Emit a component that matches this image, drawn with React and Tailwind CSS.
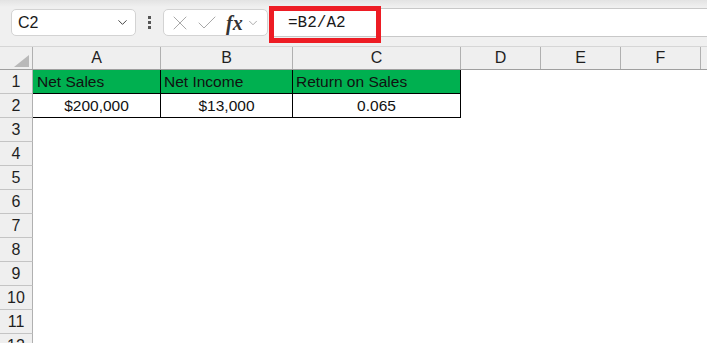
import React from 'react';
import { X, Check, ChevronDown } from 'lucide-react';

const cols = [
  { label: 'A', w: 'w-[128px]' },
  { label: 'B', w: 'w-[132px]' },
  { label: 'C', w: 'w-[168px]' },
  { label: 'D', w: 'w-[80px]' },
  { label: 'E', w: 'w-[80px]' },
  { label: 'F', w: 'w-[80px]' },
  { label: '', w: 'w-[80px]' },
];

const data = {
  1: [
    { text: 'Net Sales', align: 'justify-start pl-[4px]' },
    { text: 'Net Income', align: 'justify-start pl-[3px]' },
    { text: 'Return on Sales', align: 'justify-start pl-[3px]' },
  ],
  2: [
    { text: '$200,000', align: 'justify-center' },
    { text: '$13,000', align: 'justify-center' },
    { text: '0.065', align: 'justify-center' },
  ],
};

const Toolbar = () => (
  <div className="relative h-[46px] flex items-start pt-[9px] bg-[linear-gradient(#e3e3e3,#f0f0f0_7px)]">
    <div className="ml-[11px] w-[125px] h-[27px] bg-white border border-[#d3d3d3] rounded-[5px] flex items-center justify-between pl-[6px] pr-[5px]">
      <span className="text-[16px] text-[#1a1a1a]">C2</span>
      <ChevronDown size={15} strokeWidth={1.6} className="text-[#444]" />
    </div>
    <div className="w-[27px] h-[27px] flex flex-col items-center justify-center gap-[2px]">
      <span className="w-[3px] h-[3px] bg-[#555]" />
      <span className="w-[3px] h-[3px] bg-[#555]" />
      <span className="w-[3px] h-[3px] bg-[#555]" />
    </div>
    <div className="w-[105px] h-[27px] bg-white border border-[#d3d3d3] rounded-[5px] flex items-center pl-[4px]">
      <X size={24} strokeWidth={1} className="text-[#a8a8a8]" />
      <Check size={24} strokeWidth={1} className="text-[#a8a8a8] ml-[3px]" />
      <span className="ml-[7px] text-[20px] font-bold italic text-[#333] font-['Liberation_Serif',serif] leading-none">fx</span>
      <ChevronDown size={14} strokeWidth={1.4} className="text-[#999] ml-[3px]" />
    </div>
    <div className="flex-1 ml-[1px] h-[29px] mt-[-1px] bg-white border-y border-[#c8c8c8] flex items-center pl-[19px]">
      <span className="text-[16px] text-[#1a1a1a] font-['Liberation_Mono',monospace]">=B2/A2</span>
    </div>
    <div className="absolute left-[269px] top-[6px] w-[112px] h-[37px] border-[5px] border-[#ed1c24]" />
  </div>
);

const HeaderRow = () => (
  <div className="flex h-[24px] bg-[#efefef] border-t border-[#d6d6d6] border-b border-b-[#9f9f9f]">
    <div className="relative w-[33px] shrink-0 border-r border-[#b0b0b0]">
      <div className="absolute right-[3px] bottom-[2px] w-0 h-0 border-l-[15px] border-l-transparent border-b-[12px] border-b-[#b9b9b9]" />
    </div>
    {cols.map((c, i) => (
      <div key={i} className={`${c.w} shrink-0 border-r border-[#b0b0b0] flex items-center justify-center text-[16px] text-[#1f1f1f]`}>
        {c.label}
      </div>
    ))}
  </div>
);

const Row = ({ n }) => {
  const cells = data[n];
  return (
    <div className="flex h-[24px]">
      <div className="w-[33px] shrink-0 bg-[#efefef] border-r border-[#b0b0b0] border-b border-b-[#c4c4c4] flex items-center justify-center text-[16px] text-[#1f1f1f]">
        {n}
      </div>
      {cols.map((c, i) => {
        const cell = cells && cells[i];
        if (!cell) return <div key={i} className={`${c.w} shrink-0 bg-white`} />;
        const bg = n === 1 ? 'bg-[#00b050]' : 'bg-white';
        return (
          <div key={i} className={`${c.w} shrink-0 ${bg} border-r border-b border-black flex items-center ${cell.align} text-[15.5px] text-[#111]`}>
            {cell.text}
          </div>
        );
      })}
    </div>
  );
};

export default function App() {
  const rows = [1, 2, 3, 4, 5, 6, 7, 8, 9, 10, 11, 12];
  return (
    <div className="w-[707px] h-[343px] overflow-hidden bg-white font-['Liberation_Sans',Arial,sans-serif]">
      <Toolbar />
      <HeaderRow />
      {rows.map((n) => (
        <Row key={n} n={n} />
      ))}
    </div>
  );
}
